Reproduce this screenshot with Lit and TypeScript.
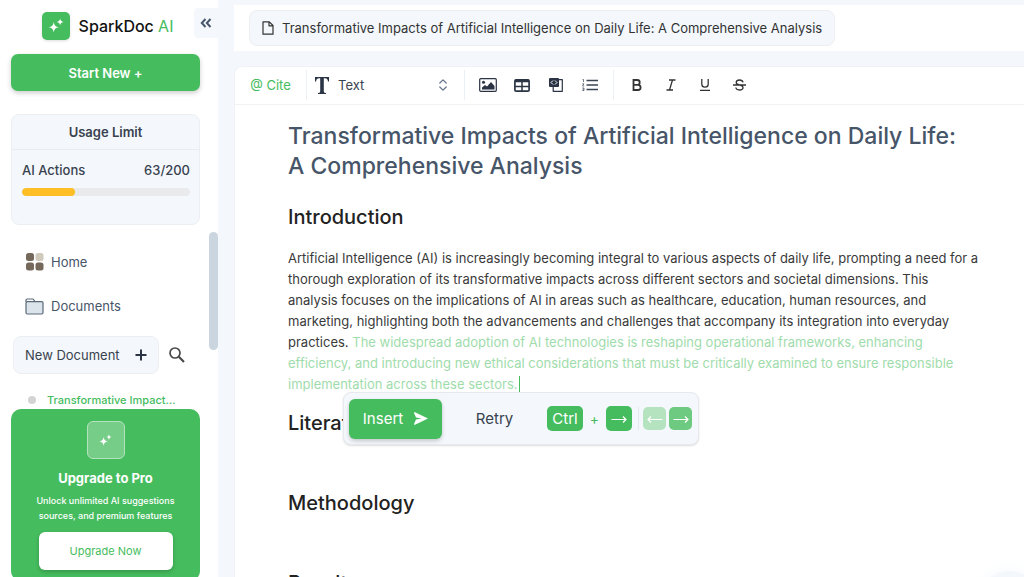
import { LitElement, html, css, svg } from "lit";
import { customElement, property } from "lit/decorators.js";

const sparkle = svg`
  <path d="M9 6.500c.9 4.800 2.200 6.100 7 7-4.800.9-6.100 2.200-7 7-.9-4.800-2.200-6.100-7-7 4.800-.9 6.100-2.200 7-7z" />
  <path d="M17.500 2c.6 3 1.500 3.900 4.500 4.500-3 .6-3.900 1.500-4.500 4.500-.6-3-1.500-3.900-4.500-4.500 3-.6 3.900-1.500 4.500-4.500z" />`;

@customElement("side-bar")
export class SideBar extends LitElement {
  @property({ type: Number }) used = 63;
  @property({ type: Number }) limit = 200;

  static styles = css`
    :host {
      position: relative;
      display: flex;
      flex-direction: column;
      box-sizing: border-box;
      width: 218px;
      height: 100vh;
      padding: 10px 18px 0 11px;
      background: #fff;
      color: #39424f;
      overflow: hidden;
    }
    * { box-sizing: border-box; }
    svg { display: block; }
    button, a { font: inherit; color: inherit; cursor: pointer; text-decoration: none; }
    button { border: 0; background: none; padding: 0; }
    .brand {
      display: flex;
      align-items: center;
      justify-content: center;
      gap: 9px;
      height: 32px;
      padding-left: 4px;
      flex: none;
      font-size: 16px;
      font-weight: 500;
      color: #111;
    }
    .brand b { font-weight: 400; color: #45bc5e; }
    .logo {
      display: grid;
      place-items: center;
      width: 28px;
      height: 28px;
      border-radius: 5px;
      background: #45bc5e;
      box-shadow: 0 1px 3px #0002;
    }
    .collapse {
      position: absolute;
      top: 8px;
      right: 0;
      display: grid;
      place-items: center;
      width: 24px;
      height: 30px;
      border-radius: 4px 0 0 4px;
      background: #f4f8fc;
      color: #475569;
    }
    .start {
      flex: none;
      height: 37px;
      margin-top: 12px;
      border-radius: 7px;
      background: #45bc5e;
      color: #fff;
      font-size: 13px;
      font-weight: 600;
      box-shadow: 0 2px 5px #0003;
    }
    .usage {
      flex: none;
      height: 111px;
      margin-top: 23px;
      border: 1px solid #eceff2;
      border-radius: 8px;
      background: #f4f8fc;
      font-size: 13px;
    }
    .usage h2 {
      margin: 0;
      font-size: 13px;
      font-weight: 600;
      line-height: 34px;
      text-align: center;
      border-bottom: 1px solid #eaedf0;
    }
    .row {
      display: flex;
      justify-content: space-between;
      padding: 10px 9px 0 10px;
      line-height: 20px;
      font-weight: 500;
    }
    .track {
      height: 8px;
      margin: 8px 9px 0 10px;
      border-radius: 4px;
      background: #e8eaec;
      overflow: hidden;
    }
    .fill { height: 100%; border-radius: 4px; background: #fdbf25; }
    .scroll { flex: 1; min-height: 0; overflow: hidden; padding-top: 23px; }
    .link {
      display: flex;
      align-items: center;
      gap: 7px;
      height: 28px;
      margin-bottom: 16px;
      padding-left: 14px;
      font-size: 13px;
      color: #475569;
    }
    .docs { display: flex; align-items: center; gap: 9px; padding-left: 2px; margin-top: 13px; }
    .new {
      display: flex;
      align-items: center;
      justify-content: space-between;
      width: 146px;
      height: 38px;
      padding: 0 11px;
      border: 1px solid #eceff2;
      border-radius: 8px;
      background: #f4f8fc;
      font-size: 13px;
    }
    .item {
      display: flex;
      align-items: center;
      gap: 11px;
      padding-left: 17px;
      margin-top: 18px;
      line-height: 16px;
      font-size: 11px;
      font-weight: 500;
      color: #45bc5e;
    }
    .item::before { content: ""; width: 8px; height: 8px; border-radius: 4px; background: #d4d4d4; }
    .thumb {
      position: absolute;
      top: 232px;
      right: 0;
      width: 9px;
      height: 118px;
      border-radius: 5px;
      background: #cbd5df;
    }
    .upgrade {
      flex: none;
      display: flex;
      flex-direction: column;
      align-items: center;
      height: 172px;
      margin-bottom: -4px;
      padding: 12px 16px;
      border-radius: 10px;
      background: #45bc5e;
      color: #fff;
      text-align: center;
    }
    .badge {
      display: grid;
      place-items: center;
      width: 38px;
      height: 38px;
      flex: none;
      border: 1px solid #b4e2bd;
      border-radius: 6px;
      background: #76cd88;
    }
    .upgrade h2 { margin: 10px 0 5px; font-size: 13px; line-height: 19px; font-weight: 700; }
    .upgrade p { margin: 0; font-size: 9px; font-weight: 500; line-height: 15px; white-space: nowrap; }
    .upgrade button {
      flex: none;
      width: 134px;
      height: 38px;
      margin-top: 9px;
      border-radius: 6px;
      background: #fff;
      color: #45bc5e;
      font-size: 11px;
      box-shadow: 0 2px 4px #0003;
    }
  `;

  render() {
    return html`
      <div class="brand">
        <span class="logo"><svg width="18" height="18" viewBox="0 0 24 24" fill="#fff">${sparkle}</svg></span>
        <span>SparkDoc <b>AI</b></span>
      </div>
      <button class="collapse" aria-label="Collapse sidebar">
        <svg width="12" height="10" viewBox="0 0 12 10" fill="none" stroke="currentColor" stroke-width="2"><path d="M5.500 1 1.800 5l3.700 4M10.500 1 6.800 5l3.700 4" /></svg>
      </button>
      <button class="start">Start New +</button>
      <section class="usage">
        <h2>Usage Limit</h2>
        <div class="row"><span>AI Actions</span><span>${this.used}/${this.limit}</span></div>
        <div class="track"><div class="fill" style="width:${(this.used / this.limit) * 100}%"></div></div>
      </section>
      <nav class="scroll">
        <a class="link" href="#home">
          <svg width="19" height="18" viewBox="-1 0 19 18" fill="#75695b"><rect width="8" height="8" rx="2.500" /><rect x="9.500" width="8" height="8" rx="2.500" fill="#d0cabd" /><rect y="9.500" width="8" height="8" rx="2.500" /><rect x="9.500" y="9.500" width="8" height="8" rx="2.500" /></svg>
          Home
        </a>
        <a class="link" href="#documents">
          <svg width="19" height="17" viewBox="0 0 19 17" stroke="#5b6878" stroke-width="1.200" stroke-linejoin="round"><path d="M1 4V2.200Q1 1 2.200 1H7.500Q8.500 1 9 2l.8 1.500" fill="#fff" /><path d="M1 5Q1 3.600 2.300 3.600H16.700Q18 3.600 18 5V14.500Q18 16 16.700 16H2.300Q1 16 1 14.500Z" fill="#dbe4ea" /></svg>
          Documents
        </a>
        <div class="docs">
          <button class="new">New Document
            <svg width="12" height="12" viewBox="0 0 12 12" stroke="#2b3445" stroke-width="2"><path d="M6 .5v11M.5 6h11" /></svg>
          </button>
          <button aria-label="Search">
            <svg width="18" height="18" viewBox="0 0 18 18" fill="none" stroke="#4a4a4a"><circle cx="7" cy="7" r="5" stroke-width="1.700" /><path d="M10.800 10.800 16 16" stroke-width="2.200" /></svg>
          </button>
        </div>
        <a class="item" href="#doc">Transformative Impact…</a>
      </nav>
      <section class="upgrade">
        <span class="badge"><svg width="15" height="15" viewBox="0 0 24 24" fill="#fff">${sparkle}</svg></span>
        <h2>Upgrade to Pro</h2>
        <p>Unlock unlimited AI suggestions<br />sources, and premium features</p>
        <button>Upgrade Now</button>
      </section>
      <div class="thumb"></div>
    `;
  }
}

@customElement("suggestion-bar")
export class SuggestionBar extends LitElement {
  static styles = css`
    :host {
      display: flex;
      align-items: center;
      box-sizing: border-box;
      width: 356px;
      height: 53px;
      padding: 0 6px 0 5px;
      border: 1px solid #e6eaee;
      border-radius: 8px;
      background: #f4f8fc;
      box-shadow: 0 1px 2px #0002;
      color: #39424f;
      font-size: 15px;
    }
    button { font: inherit; color: inherit; border: 0; background: none; padding: 0; cursor: pointer; }
    .insert {
      display: flex;
      align-items: center;
      justify-content: center;
      gap: 11px;
      width: 93px;
      height: 40px;
      border-radius: 6px;
      background: #45bc5e;
      color: #fff;
      box-shadow: 0 2px 4px #0003;
    }
    .retry { width: 105px; }
    kbd, .key {
      display: grid;
      place-items: center;
      width: 26px;
      height: 25px;
      border-radius: 5px;
      background: #45bc5e;
      color: #fff;
      font: inherit;
    }
    kbd.wide { width: 36px; }
    .plus { flex: 1; text-align: center; color: #45bc5e; font-size: 14px; }
    .tail { display: flex; gap: 3px; margin-left: 6px; padding-left: 4px; border-left: 1px solid #e6eaee; }
    .tail .key { width: 23px; height: 23px; }
    .tail .prev { background: #b5e3bf; }
    .tail .next { background: #6dca80; }
  `;

  private arrow(left: boolean) {
    return html`<svg width="16" height="10" viewBox="0 0 16 10" fill="none" stroke="#fff" stroke-width="1.200">
      ${left ? svg`<path d="M15.500 5.500H1M4 2.500 1 5.500l3 3" />` : svg`<path d="M.5 5.500H15M12 2.500l3 3-3 3" />`}
    </svg>`;
  }

  render() {
    return html`
      <button class="insert">Insert
        <svg width="14" height="13" viewBox="0 0 14 13" fill="#fff"><path d="M.5 0 14 6.500.5 13 0 12 2 7.500 7.500 6.500 2 5.500 0 1Z" /></svg>
      </button>
      <button class="retry">Retry</button>
      <kbd class="wide">Ctrl</kbd><span class="plus">+</span><kbd>${this.arrow(false)}</kbd>
      <div class="tail">
        <button class="key prev" aria-label="Previous">${this.arrow(true)}</button>
        <button class="key next" aria-label="Next">${this.arrow(false)}</button>
      </div>
    `;
  }
}

@customElement("doc-editor")
export class DocEditor extends LitElement {
  static styles = css`
    :host {
      display: flex;
      flex-direction: column;
      flex: 1;
      min-height: 0;
      overflow: hidden;
      border: 1px solid #eff3f6;
      border-right: 0;
      border-bottom: 0;
      border-radius: 8px 0 0 0;
      background: #fff;
    }
    * { box-sizing: border-box; }
    .toolbar {
      display: flex;
      align-items: center;
      flex: none;
      height: 38px;
      padding-bottom: 1px;
      border-bottom: 1px solid #f0f2f4;
      color: #2f3847;
    }
    button {
      display: grid;
      place-items: center;
      width: 34px;
      height: 30px;
      padding: 0;
      border: 0;
      background: none;
      color: inherit;
      font: inherit;
      cursor: pointer;
    }
    .group { display: flex; align-items: center; height: 30px; border-right: 1px solid #eaf0f5; }
    .group:last-child { border: 0; }
    .cite { width: 71px; color: #45bc5e; font-size: 13px; }
    .style { width: 158px; padding: 0 17px 0 8px; gap: 9px; }
    select {
      flex: 1;
      min-width: 0;
      appearance: none;
      border: 0;
      background: none;
      padding: 0;
      font: inherit;
      font-size: 13px;
      color: #39424f;
    }
    .insert { width: 149px; padding-left: 6px; }
    .marks { padding-left: 6px; }
    .page {
      position: relative;
      max-width: 790px;
      padding: 16px 53px 0;
      color: #222;
    }
    h1 { margin: 0; font-size: 23px; line-height: 30px; font-weight: 500; color: #475569; }
    h2 { margin: 15px 0 54px; font-size: 20px; line-height: 26px; font-weight: 500; }
    h2.first { margin: 23px 0 18px; }
    p { margin: 0; font-size: 13px; line-height: 21px; color: #3a3a3a; white-space: nowrap; }
    ins { text-decoration: none; color: #9fdcac; border-right: 1px solid #45bc5e; padding: 0 1px 2px 0; }
    suggestion-bar { position: absolute; left: 108px; top: 287px; }
  `;

  render() {
    return html`
      <div class="toolbar" role="toolbar">
        <div class="group"><button class="cite">@ Cite</button></div>
        <label class="group style">
          <svg width="14" height="17" viewBox="0 0 14 17" fill="#2b3445"><path d="M0 0H14V4.500H13Q12.500 1.200 10 1.200H8.800V14.500Q8.800 16 11 16V17H3V16Q5.200 16 5.200 14.500V1.200H4Q1.500 1.200 1 4.500H0Z" /></svg>
          <select aria-label="Text style"><option>Text</option><option>Heading</option></select>
          <svg width="8" height="12" viewBox="0 0 8 12" fill="none" stroke="#64748b" stroke-width="1.200" stroke-linecap="round" stroke-linejoin="round"><path d="M.8 4 4 .8 7.200 4M.8 8 4 11.200 7.200 8" /></svg>
        </label>
        <div class="group insert">
          <button aria-label="Image"><svg width="18" height="14" viewBox="0 0 18 14" fill="#2b3445"><rect x=".7" y=".7" width="16.600" height="12.600" rx="1" fill="none" stroke="#2b3445" stroke-width="1.200" /><circle cx="4.500" cy="4.300" r="1.500" /><path d="M3 11.500V9.500L6 7l2 1.500L12 4l3.500 4v3.500Z" /></svg></button>
          <button aria-label="Table"><svg width="16" height="13" viewBox="0 0 16 13" fill="none" stroke="#2b3445" stroke-width="1.700"><rect x=".9" y=".9" width="14.200" height="11.200" rx="1.200" /><path d="M1 2h14" stroke-width="2.500" /><path d="M8 2v10M1 7.500h14" stroke-width="1.500" /></svg></button>
          <button aria-label="Code block"><svg width="14" height="14" viewBox="0 0 14 14" fill="none"><path d="M9 1.600H13.300V13.300H4.200V8" stroke="#2b3445" stroke-width="1.200" stroke-linejoin="round" /><rect width="10" height="9" rx="1" fill="#2b3445" /><path d="M4 2.500 2 4.500l2 2M6 2.500l2 2-2 2" stroke="#fff" /></svg></button>
          <button aria-label="Numbered list"><svg width="16" height="12" viewBox="0 0 16 12" stroke="#3a4453" fill="none"><path d="M4.500 1.500H16M4.500 6H16M4.500 10.500H16" stroke-width="1.400" /><path d="M.5.5H1.500V3M.3 4.800H2L.5 7H2.200M.3 9H2V11.500H.3M.6 10.200H2" stroke-width=".7" /></svg></button>
        </div>
        <div class="group marks">
          <button aria-label="Bold"><svg width="10" height="12" viewBox="0 0 10 12" fill="none" stroke="#333" stroke-width="1.800"><path d="M1.500 1H5.300A2.400 2.400 0 0 1 5.300 5.800H1.500ZM1.500 5.800H6A2.600 2.600 0 0 1 6 11H1.500Z" /></svg></button>
          <button aria-label="Italic"><svg width="10" height="12" viewBox="0 0 10 12" fill="none" stroke="#333" stroke-width="1.300"><path d="M3 1H9.500M.5 11H7M6.500 1 3.500 11" /></svg></button>
          <button aria-label="Underline"><svg width="10" height="12" viewBox="0 0 10 12" fill="none" stroke="#333" stroke-width="1.300"><path d="M1.800 0V5A3.200 3.200 0 0 0 8.200 5V0M0 11.300H10" /></svg></button>
          <button aria-label="Strikethrough"><svg width="13" height="12" viewBox="0 0 13 12" fill="none" stroke="#333" stroke-width="1.300"><path d="M10 3.300Q9.500 1 6.500 1 3.200 1 3.200 3.400 3.200 5 6.500 5.800 10 6.700 10 8.500 10 11 6.500 11 3.200 11 2.800 8.500M0 6H13" /></svg></button>
        </div>
      </div>
      <article class="page">
        <h1>Transformative Impacts of Artificial Intelligence on Daily Life: A Comprehensive Analysis</h1>
        <h2 class="first">Introduction</h2>
        <p>
          Artificial Intelligence (AI) is increasingly becoming integral to various aspects of daily life, prompting a need for a<br />
          thorough exploration of its transformative impacts across different sectors and societal dimensions. This<br />
          analysis focuses on the implications of AI in areas such as healthcare, education, human resources, and<br />
          marketing, highlighting both the advancements and challenges that accompany its integration into everyday<br />
          practices. <ins>The widespread adoption of AI technologies is reshaping operational frameworks, enhancing<br />
          efficiency, and introducing new ethical considerations that must be critically examined to ensure responsible<br />
          implementation across these sectors.</ins>
        </p>
        <h2>Literature Review</h2>
        <h2>Methodology</h2>
        <h2>Results</h2>
        <suggestion-bar></suggestion-bar>
      </article>
    `;
  }
}

@customElement("app-root")
export class AppRoot extends LitElement {
  static styles = css`
    :host {
      display: flex;
      height: 100vh;
      overflow: hidden;
      background: #f4f8fc;
      font-family: Inter, "Liberation Sans", sans-serif;
    }
    * { box-sizing: border-box; }
    side-bar { flex: none; }
    main {
      position: relative;
      flex: 1;
      min-width: 0;
      display: flex;
      flex-direction: column;
      padding: 5px 0 0 16px;
    }
    header { flex: none; height: 46px; margin-bottom: 15px; padding: 5px 15px; background: #fff; }
    .tab {
      display: flex;
      align-items: center;
      gap: 8px;
      height: 36px;
      padding: 0 12px;
      border: 1px solid #eceff2;
      border-radius: 8px;
      background: #f4f8fc;
      color: #333;
      font: inherit;
      font-size: 13px;
      white-space: nowrap;
    }
    .glow {
      position: absolute;
      right: -15px;
      bottom: -54px;
      width: 60px;
      height: 60px;
      border-radius: 50%;
      background: #f4f8fc;
      box-shadow: 0 0 16px #f4f8fc;
    }
  `;

  render() {
    return html`
      <side-bar></side-bar>
      <main>
        <header>
          <button class="tab">
            <svg width="12" height="14" viewBox="0 0 12 14" fill="none" stroke="#333" stroke-width="1.200" stroke-linejoin="round"><path d="M1 .8H7.300L11 4.500V13.200H1ZM7 .8V4.800H11" /></svg>
            Transformative Impacts of Artificial Intelligence on Daily Life: A Comprehensive Analysis
          </button>
        </header>
        <doc-editor></doc-editor>
        <div class="glow"></div>
      </main>
    `;
  }
}
